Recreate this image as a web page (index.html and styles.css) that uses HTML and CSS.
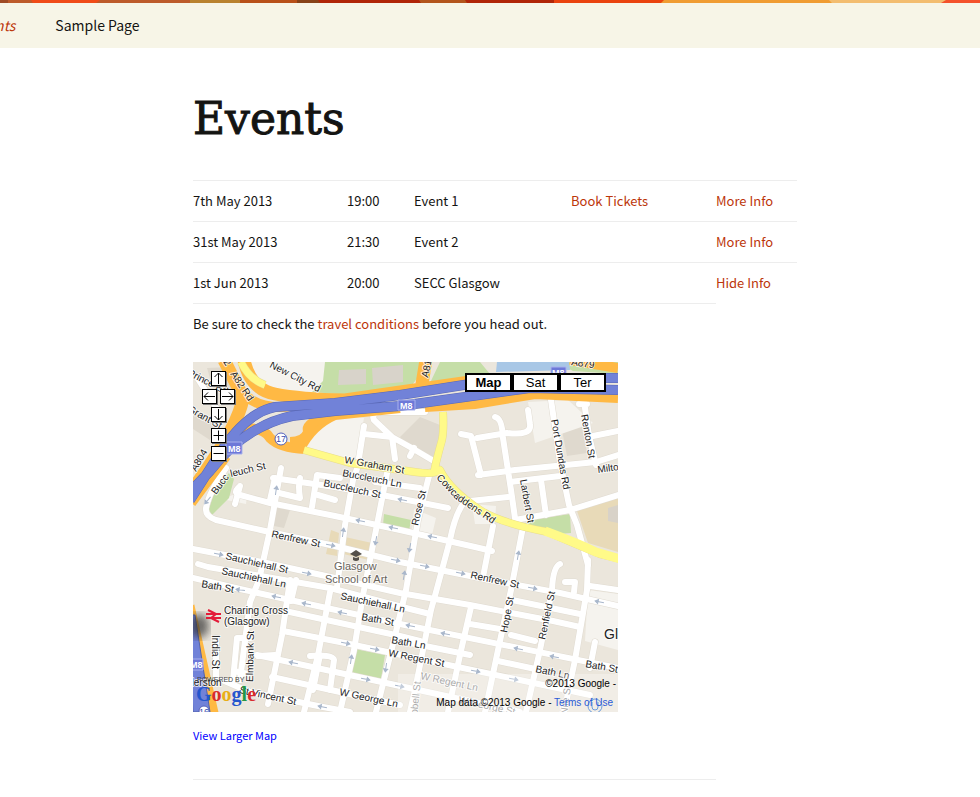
FILE: index.html
```
<!DOCTYPE html>
<html lang="en">
<head>
<meta charset="utf-8">
<title>Events</title>
<link rel="stylesheet" href="styles.css">
</head>
<body>
<svg class="ribbon" viewBox="0 0 980 3" preserveAspectRatio="none" aria-hidden="true">
  <path fill="#bd5b2b" d="M0 0h200v3H0z"/><path fill="#9f4b25" d="M0 0h8v3H0z"/>
  <path fill="#f04b18" d="M31 0h69l-4 3H33z"/>
  <path fill="#b9822f" d="M190 0h50v3h-50z"/><path fill="#b85019" d="M240 0h57v3h-57z"/>
  <path fill="#874218" d="M297 0h24v3h-24z"/><path fill="#b02508" d="M318 0h236v3H320z"/>
  <path fill="#b3551c" d="M419 0h46l2 3h-46z"/><path fill="#ea430e" d="M554 0h112v3H554z"/>
  <path fill="#f09c32" d="M664 0h168v3H661z"/><path fill="#f3bd70" d="M829 0h120v3H832z"/>
  <path fill="#f4522c" d="M946 0h34v3h-39z"/>
</svg>
<nav class="navbar">
  <a class="current" href="#">Events</a>
  <a href="#">Sample Page</a>
</nav>
<main class="content">
  <h1>Events</h1>
  <table class="events">
    <colgroup><col class="date"><col class="time"><col class="name"><col class="tickets"><col class="info"></colgroup>
    <tbody>
      <tr><td>7th May 2013</td><td>19:00</td><td>Event 1</td><td><a href="#">Book Tickets</a></td><td><a href="#">More Info</a></td></tr>
      <tr><td>31st May 2013</td><td>21:30</td><td>Event 2</td><td></td><td><a href="#">More Info</a></td></tr>
      <tr><td>1st Jun 2013</td><td>20:00</td><td>SECC Glasgow</td><td></td><td rowspan="2"><a href="#">Hide Info</a></td></tr>
      <tr>
        <td class="details" colspan="4">
          <p>Be sure to check the <a href="#">travel conditions</a> before you head out.</p>
          <div class="map">
            <svg class="streets" viewBox="193 362 425 350" role="img" aria-label="Street map of Glasgow">
              <defs>
                <path id="arrow" d="M-4 0H4M-5 0l3-2v4z"/>
                <filter id="soft"><feGaussianBlur stdDeviation="4"/></filter>
                <g id="roads">
                  <path d="M226 468Q209 492 206 508Q205 516 216 520L265 531L335 546L400 562L475 577L560 593L618 606"/>
                  <path d="M238 488Q233 493 240 495L270 503L335 516L400 530L475 547L492 551"/>
                  <path d="M193 549L262 562L335 578L400 593L470 605L553 621L580 627"/>
                  <path d="M198 564L208 567L255 575L330 588L410 609L430 614"/>
                  <path d="M193 578L240 589L400 624L618 668"/>
                  <path d="M285 611L400 636L420 641M400 641L470 655"/>
                  <path d="M283 631L345 643L420 659L515 679L590 695"/>
                  <path d="M257 655L400 686L520 712"/>
                  <path d="M222 680L250 692L323 707L350 712M272 677L340 692L400 705"/>
                  <path d="M281 468L270 530L259 580L250 602L240 680"/>
                  <path d="M290 580L282 635L268 704M291 601L296 580"/>
                  <path d="M330 592L318 655L304 712M337 587L345 525L353 480L360 460"/>
                  <path d="M388 468L376 530L363 595L354 650L340 712"/>
                  <path d="M430 472L418 520L406 590L394 640L376 712"/>
                  <path d="M463 504Q455 515 450 540L436 592L431 610L415 690L410 712"/>
                  <path d="M471 607L460 655L448 712M470 624L500 629M493 526L483 577"/>
                  <path d="M523 527L511 590L498 650L485 712"/>
                  <path d="M552 590L540 650L526 712M512 600L580 614M511 635L535 641M498 661L540 670"/>
                  <path d="M588 560L587 590L575 660L564 712M552 590Q553 567 560 564M565 582h10L574 592M590 586L618 590"/>
                  <path d="M273 478L335 487L387 496L448 508M275 492L300 498Q298 486 300 478M375 482L420 488"/>
                  <path d="M312 507L317 475L340 478M318 495L335 500M270 500L275 478"/>
                  <path d="M374 420Q371 413 380 412L425 412M364 426L359 458M364 434L392 437L374 420M392 437L395 459M392 437L410 447L432 460M410 456L414 448"/>
                  <path d="M461 434L471 436L481 475M477 438L507 433Q532 436 530 424L528 410M495 417Q502 418 503 438L511 490L515 518M478 475L515 470L596 462L618 455"/>
                  <path d="M551 400L560 462L569 505L577 525L588 565M584 401L589 436L596 465M593 436L618 431M587 404h-8M541 480L546 515M510 482L560 476M515 520L570 510L618 495M470 501L508 497"/>
                  <path d="M216 638L216 680M233 680L237 638H250M234 671L248 674M258 656L275 655M310 656Q333 654 334 660L330 690M320 655L313 690M595 642L590 668"/>
                  <path d="M240 486L235 504M198 379L224 420M222 362L240 396"/>
                </g>
              </defs>
              <path fill="#ebe6dc" d="M193 362h425v350H193z"/>
              <g fill="#dfd9ce">
                <path d="M400 437l20-20 25 10-4 31-30-5zM273 507l17 3-6 18-15-3zM560 420l20-4 7 37-20 3z"/>
                <path d="M207 368l25-1 9 22-14 9-15-13zM193 409l23 16-6 15-17-11z"/>
              </g>
              <g fill="#f5f3ee">
                <path d="M320 410l44 8-8 44-50-12-4-20zM250 362h80l-4 30-40 2-26-10zM528 402l40-2 25 23-58 20zM222 499l24 5 1-8-9-3zM414 509l22 9-4 17-20-5zM588 590l30 4v56l-33-9zM472 504l24 2-1 18-20 0z"/>
              </g>
              <g fill="#c5dea7">
                <path d="M325 362h105l-18 23-62 10-38-3 11-11zM440 362h40l10 12-60 9zM556 362h62v12l-45-3z"/>
                <path d="M384 514l27 6-2 11-26-6zM355 649l30 6-4 24-30-6zM530 520l40-6 1 19-13 1-36-8zM229 473l5 6-5 19-18 18-3-4 7-22z"/>
              </g>
              <path fill="#d8d3ca" d="M339 370l27-1v15l-28 1zM372 368l31-3v17l-30 3z"/>
              <path fill="#a8c7e6" d="M497 362h72l1 8-74 2z"/>
              <path fill="#e8dab8" d="M576 508l42-16v60l-30-9zM331 530l8 3-2 23-11-2zM345 537l27 6-3 17-30-7z"/>
              <path fill="#d8d2c8" d="M608 508l10-3v18l-10-2z"/>
              <use href="#roads" class="road-case"/><use href="#roads" class="road"/>
              <g class="ramp">
                <path d="M224 360L243 397Q240 425 190 493"/>
                <path d="M244 360Q250 389 275 394T345 400L470 382"/>
                <path d="M426 360L422 384M190 502L225 455M188 606L214 722"/>
                <path class="slim" d="M233 380Q250 412 292 406M240 430Q262 425 270 438Q280 448 305 449M300 449Q312 425 335 415L400 408"/>
                <path class="slim" d="M330 417Q305 422 308 432Q305 442 290 442M425 407L475 404L535 394L618 398M570 360L618 368"/>
              </g>
              <path class="yellow-case" d="M304 450L350 463L415 472Q435 475 440 470Q450 490 480 510Q500 523 548 532Q578 545 600 554L620 559M443 412Q444 430 442 440Q435 465 434 473M241 362Q249 379 265 385"/>
              <path class="yellow" d="M304 450L350 463L415 472Q435 475 440 470Q450 490 480 510Q500 523 548 532Q578 545 600 554L620 559M443 412Q444 430 442 440Q435 465 434 473M241 362Q249 379 265 385"/>
              <path class="yellow wide" d="M545 531Q575 542 596 552L620 559"/>
              <path class="motorway-case" d="M190 500L222 450Q248 412 275 407L335 403L400 395L470 384L540 378L618 378M190 492L210 471Q245 426 292 416L335 411L400 406L465 397L530 388L618 390"/>
              <path class="motorway" d="M190 500L222 450Q248 412 275 407L335 403L400 395L470 384L540 378L618 378M190 492L210 471Q245 426 292 416L335 411L400 406L465 397L530 388L618 390"/>
              <path fill="#7182d8" stroke="#5262ad" d="M188 615h7l15 97h-17z"/>
              <ellipse cx="199" cy="626" rx="10" ry="12" fill="#333" opacity=".7" filter="url(#soft)"/>
              <g class="arrows">
                <use href="#arrow" transform="translate(277 597) rotate(12)"/><use href="#arrow" transform="translate(307 604) rotate(12)"/><use href="#arrow" transform="translate(343 613) rotate(12)"/>
                <use href="#arrow" transform="translate(411 626) rotate(12)"/><use href="#arrow" transform="translate(446 634) rotate(12)"/><use href="#arrow" transform="translate(519 649) rotate(12)"/><use href="#arrow" transform="translate(555 657) rotate(12)"/>
                <use href="#arrow" transform="translate(345 643) rotate(192)"/><use href="#arrow" transform="translate(374 649) rotate(192)"/><use href="#arrow" transform="translate(475 671) rotate(192)"/><use href="#arrow" transform="translate(513 679) rotate(192)"/>
                <use href="#arrow" transform="translate(294 663) rotate(12)"/><use href="#arrow" transform="translate(365 679) rotate(192)"/><use href="#arrow" transform="translate(399 686) rotate(192)"/><use href="#arrow" transform="translate(323 707) rotate(12)"/>
                <use href="#arrow" transform="translate(218 554) rotate(192)"/><use href="#arrow" transform="translate(306 573) rotate(192)"/><use href="#arrow" transform="translate(330 545) rotate(192)"/><use href="#arrow" transform="translate(395 560) rotate(192)"/><use href="#arrow" transform="translate(424 566) rotate(192)"/><use href="#arrow" transform="translate(460 573) rotate(192)"/><use href="#arrow" transform="translate(532 588) rotate(192)"/>
                <use href="#arrow" transform="translate(361 521) rotate(12)"/><use href="#arrow" transform="translate(394 528) rotate(12)"/><use href="#arrow" transform="translate(433 537) rotate(12)"/><use href="#arrow" transform="translate(403 500) rotate(12)"/><use href="#arrow" transform="translate(241 590) rotate(8)"/>
                <use href="#arrow" transform="translate(276 491) rotate(98)"/><use href="#arrow" transform="translate(343 533) rotate(98)"/><use href="#arrow" transform="translate(376 540) rotate(280)"/><use href="#arrow" transform="translate(410 547) rotate(280)"/><use href="#arrow" transform="translate(404 576) rotate(100)"/><use href="#arrow" transform="translate(518 556) rotate(100)"/><use href="#arrow" transform="translate(351 660) rotate(98)"/><use href="#arrow" transform="translate(386 667) rotate(278)"/><use href="#arrow" transform="translate(208 500) rotate(-50)"/>
                <use href="#arrow" transform="translate(600 602) rotate(12)"/>
              </g>
              <g class="shield"><path d="M398 400h17v10h-17zM226 442h16v12h-16zM190 659h13v11h-13zM551 367h15v11h-15z"/></g>
              <g class="shield-text"><text x="400" y="409">M8</text><text x="228" y="452">M8</text><text x="190" y="668">M8</text><text x="552" y="376">M8</text></g>
              <g class="junction"><circle cx="281" cy="439" r="6"/><text x="276" y="442">17</text><circle cx="204" cy="711" r="5"/><text x="199" y="715">16</text></g>
              <g class="labels">
                <text transform="translate(269 367) rotate(27)">New City Rd</text>
                <text transform="translate(230 374) rotate(56)">A82 Rd</text>
                <text transform="translate(223 362) rotate(56)">2</text>
                <text transform="translate(196 472) rotate(-60)">A804</text>
                <text transform="translate(428 378) rotate(-78)">A81</text>
                <text transform="translate(571 365) rotate(8)">A879</text>
                <text transform="translate(187 375) rotate(27)">Prince Ed</text>
                <text transform="translate(187 411) rotate(29)">Grant St</text>
                <text transform="translate(216 495) rotate(-53)">Bucc</text><text transform="translate(231 477) rotate(-13)">leuch St</text>
                <text transform="translate(344 463) rotate(10)">W Graham St</text>
                <text transform="translate(342 476) rotate(11)">Buccleuch Ln</text>
                <text transform="translate(323 486) rotate(12)">Buccleuch St</text>
                <text transform="translate(418 526) rotate(-77)">Rose St</text>
                <text transform="translate(436 478) rotate(47)">Cowca</text><text transform="translate(457 500) rotate(34)">ddens Rd</text>
                <text transform="translate(551 420) rotate(80)">Port Dundas Rd</text>
                <text transform="translate(581 415) rotate(80)">Renton St</text>
                <text transform="translate(598 473) rotate(-8)">Milton St</text>
                <text transform="translate(520 480) rotate(80)">Larbert St</text>
                <text transform="translate(271 537) rotate(12)">Renfrew St</text>
                <text transform="translate(225 559) rotate(13)">Sauchiehall St</text>
                <text transform="translate(221 574) rotate(12)">Sauchiehall Ln</text>
                <text transform="translate(201 587) rotate(10)">Bath St</text>
                <text transform="translate(340 599) rotate(12)">Sauchiehall Ln</text>
                <text transform="translate(361 620) rotate(10)">Bath St</text>
                <text transform="translate(391 643) rotate(10)">Bath Ln</text>
                <text transform="translate(388 656) rotate(11)">W Regent St</text>
                <text class="faded" transform="translate(420 679) rotate(12)">W Regent Ln</text>
                <text transform="translate(339 695) rotate(12)">W George Ln</text>
                <text class="faded" transform="translate(458 703) rotate(12)">W George St</text>
                <text transform="translate(470 578) rotate(12)">Renfrew St</text>
                <text transform="translate(507 633) rotate(-79)">Hope St</text>
                <text transform="translate(545 640) rotate(-78)">Renfield St</text>
                <text transform="translate(585 667) rotate(10)">Bath St</text>
                <text transform="translate(535 672) rotate(12)">Bath Ln</text>
                <text class="faded" transform="translate(567 715) rotate(-82)">Nile St</text>
                <text class="faded" transform="translate(415 736) rotate(-84)">Campbell St</text>
                <text transform="translate(212 635) rotate(90)">India St</text>
                <text transform="translate(253 682) rotate(-89)">Elmbank St</text>
                <text transform="translate(239 693) rotate(12)">St Vincent St</text>
                <text x="176" y="686">Anderston</text>
                <text x="224" y="614">Charing Cross</text><text x="224" y="625">(Glasgow)</text>
                <text class="place" x="334" y="570">Glasgow</text><text class="place" x="325" y="583">School of Art</text>
                <text class="city" x="604" y="639">Glasgow</text>
              </g>
              <path fill="#54504a" d="M350 554l6-4 6 4-6 3zM353 557v3q3 2 6 0v-3l-3 1z"/>
              <path fill="none" stroke="#e31b38" stroke-width="2" d="M206 614h15M206 618h15M208 610l8 4-5 4 8 4"/>
              <path fill="#fff" opacity=".3" d="M398 674h220v38H398z"/>
              <g fill="none" stroke="#6b9bdd"><circle cx="595" cy="706" r="7"/><path d="M592 702v5q0 3 3 3t3-3v-5"/></g>
              <text class="powered" x="197" y="682">POWERED BY</text>
              <text class="google" x="196" y="701"><tspan fill="#2456ce">G</tspan><tspan fill="#d82b2d">o</tspan><tspan fill="#e9ae16">o</tspan><tspan fill="#2456ce">g</tspan><tspan fill="#239845">l</tspan><tspan fill="#d82b2d">e</tspan></text>
            </svg>
            <div class="pan">
              <button class="up" aria-label="Pan up"><svg viewBox="0 0 13 13"><path d="M6.500 12V1M2.500 5l4-4 4 4"/></svg></button>
              <button class="left" aria-label="Pan left"><svg viewBox="0 0 13 13"><path d="M12 6.500H1M5 2.500l-4 4 4 4"/></svg></button>
              <button class="right" aria-label="Pan right"><svg viewBox="0 0 13 13"><path d="M1 6.500h11M8 2.500l4 4-4 4"/></svg></button>
              <button class="down" aria-label="Pan down"><svg viewBox="0 0 13 13"><path d="M6.500 1v11M2.500 8l4 4 4-4"/></svg></button>
              <button class="in" aria-label="Zoom in"><svg viewBox="0 0 13 13"><path d="M1.500 6.500h10M6.500 1.500v10"/></svg></button>
              <button class="out" aria-label="Zoom out"><svg viewBox="0 0 13 13"><path d="M1.500 6.500h10"/></svg></button>
            </div>
            <div class="types"><button class="active">Map</button><button>Sat</button><button>Ter</button></div>
            <div class="credits"><span>©2013 Google -</span><span class="terms">Map data ©2013 Google - <a href="#">Terms of Use</a></span></div>
          </div>
          <a class="larger" href="#">View Larger Map</a>
        </td>
      </tr>
    </tbody>
  </table>
</main>
</body>
</html>
```
FILE: styles.css
```
body {
  margin: 0;
  background: #fff;
  color: #141412;
  font-family: "Noto Sans CJK SC", "Noto Sans", sans-serif;
  font-size: 13px;
  overflow-x: hidden;
}
a { color: #bc360a; text-decoration: none; }
.ribbon { display: block; width: 100%; height: 3px; }
.navbar {
  display: flex;
  gap: 40px;
  height: 45px;
  margin-left: -28px;
  background: #f7f5e7;
  font-size: 14px;
  line-height: 44px;
}
.navbar a { color: #141412; }
.navbar .current { color: #bc360a; font-style: italic; }
.content { max-width: 604px; padding-left: 193px; }
h1 {
  margin: 41px 0 31px;
  font: 44px/60px "DejaVu Serif", serif;
  -webkit-text-stroke: 1px #141412;
}
.events {
  width: 100%;
  table-layout: fixed;
  border-collapse: separate;
  border-spacing: 0;
  line-height: 24px;
}
.date { width: 154px; }
.time { width: 67px; }
.name { width: 157px; }
.tickets { width: 145px; }
td { padding: 8px 0; border-top: 1px solid #ededed; vertical-align: top; text-align: left; }
.details { border-bottom: 1px solid #ededed; padding-bottom: 32px; }
.details p { margin: 0 0 26px; }
.map { position: relative; width: 425px; max-width: 100%; overflow: hidden; font-family: "Liberation Sans", Arial, sans-serif; }
.streets { display: block; width: 100%; }
.road-case, .road { fill: none; stroke: #e0dbd1; stroke-width: 7; stroke-linecap: round; stroke-linejoin: round; }
.road { stroke: #fff; stroke-width: 6; }
.ramp { fill: none; stroke: #ffb944; stroke-width: 13; }
.slim { stroke-width: 10; }
.yellow-case { fill: none; stroke: #e8dc8c; stroke-width: 8; stroke-linejoin: round; }
.yellow { fill: none; stroke: #fffa88; stroke-width: 7; stroke-linejoin: round; }
.wide { stroke-width: 9; }
.motorway-case { fill: none; stroke: #5968b5; stroke-width: 10; stroke-linejoin: round; }
.motorway { fill: none; stroke: #7182d8; stroke-width: 9; stroke-linejoin: round; }
.arrows { fill: #a9b7cb; stroke: #a9b7cb; stroke-width: 1; }
.shield { fill: #6d78d8; stroke: #a9b1ed; }
.shield-text { fill: #fff; font-size: 9px; font-weight: bold; }
.junction circle { fill: #fff; stroke: #5260bb; }
.junction text { fill: #3c4cab; font-size: 9px; }
.labels { fill: #222; font-size: 10px; stroke: #fff; stroke-opacity: .75; stroke-width: 2px; stroke-linejoin: round; paint-order: stroke; }
.faded { fill: #888; }
.place { fill: #68635b; font-size: 11px; }
.city { font-size: 14px; }
.powered { fill: #444; font-size: 7px; }
.google { font: bold 20px "Liberation Serif", serif; }
.pan {
  position: absolute;
  top: 9px;
  left: 9px;
  display: grid;
  grid-template-columns: repeat(4, 9px);
  grid-template-rows: 18px 18px 21px 18px 18px;
}
.pan button {
  box-sizing: border-box;
  width: 15px;
  height: 15px;
  padding: 0;
  border: 1px solid #000;
  background: #fff;
  box-shadow: 1px 1px 0 #777;
  line-height: 0;
}
.pan svg { width: 13px; height: 13px; fill: none; stroke: #000; }
.up { grid-area: 1 / 2; }
.left { grid-area: 2 / 1; }
.right { grid-area: 2 / 3; }
.down { grid-area: 3 / 2; }
.in { grid-area: 4 / 2; }
.out { grid-area: 5 / 2; }
.types { position: absolute; top: 11px; right: 12px; display: flex; }
.types button {
  box-sizing: border-box;
  width: 47px;
  height: 19px;
  padding: 0;
  border: 1px solid #000;
  outline: 1px solid #000;
  outline-offset: -2px;
  background: #fff;
  color: #000;
  font: 13px/15px "Liberation Sans", Arial, sans-serif;
}
.types .active { font-weight: bold; }
.credits {
  position: absolute;
  right: 2px;
  bottom: 0;
  display: flex;
  flex-direction: column;
  align-items: flex-end;
  color: #000;
  font-size: 10px;
  line-height: 19px;
}
.terms { padding-right: 3px; }
.credits a { color: #2a5bd7; }
.larger { display: block; margin-top: 11px; color: #00f; font-size: 11px; }
```
